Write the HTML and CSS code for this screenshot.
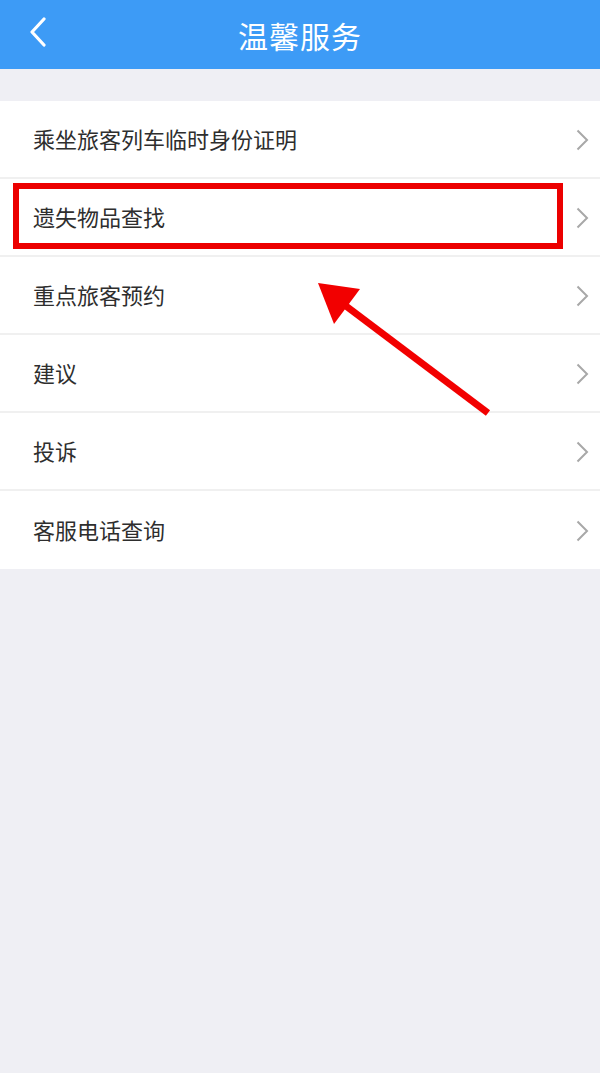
FILE: index.html
```html
<!DOCTYPE html>
<html lang="zh-CN">
<head>
    <meta charset="UTF-8">
    <meta name="viewport" content="width=device-width, initial-scale=1.0">
    <title>温馨服务</title>
    <link rel="stylesheet" href="styles.css">
</head>
<body>
    <div class="page">
        <div class="header">
            <span class="back">
                <svg width="20" height="30" viewBox="0 0 20 30"><path d="M16 2 L4 15 L16 28" fill="none" stroke="#fff" stroke-width="3.2" stroke-linecap="round" stroke-linejoin="round"/></svg>
            </span>
            <h1>温馨服务</h1>
        </div>
        <div class="list">
            <div class="item"><span>乘坐旅客列车临时身份证明</span><svg class="arrow" width="13" height="22" viewBox="0 0 13 22"><path d="M1.5 1.5 L11 11 L1.5 20.5" fill="none" stroke="#a8a8a8" stroke-width="2"/></svg></div>
            <div class="item"><span>遗失物品查找</span><svg class="arrow" width="13" height="22" viewBox="0 0 13 22"><path d="M1.5 1.5 L11 11 L1.5 20.5" fill="none" stroke="#a8a8a8" stroke-width="2"/></svg></div>
            <div class="item"><span>重点旅客预约</span><svg class="arrow" width="13" height="22" viewBox="0 0 13 22"><path d="M1.5 1.5 L11 11 L1.5 20.5" fill="none" stroke="#a8a8a8" stroke-width="2"/></svg></div>
            <div class="item"><span>建议</span><svg class="arrow" width="13" height="22" viewBox="0 0 13 22"><path d="M1.5 1.5 L11 11 L1.5 20.5" fill="none" stroke="#a8a8a8" stroke-width="2"/></svg></div>
            <div class="item"><span>投诉</span><svg class="arrow" width="13" height="22" viewBox="0 0 13 22"><path d="M1.5 1.5 L11 11 L1.5 20.5" fill="none" stroke="#a8a8a8" stroke-width="2"/></svg></div>
            <div class="item"><span>客服电话查询</span><svg class="arrow" width="13" height="22" viewBox="0 0 13 22"><path d="M1.5 1.5 L11 11 L1.5 20.5" fill="none" stroke="#a8a8a8" stroke-width="2"/></svg></div>
        </div>
        <div class="mark"></div>
        <svg class="pointer" width="200" height="160" viewBox="0 0 200 160">
            <line x1="28" y1="32" x2="186" y2="151" stroke="#f20000" stroke-width="7"/>
            <polygon points="16,21 58,27 32,62" fill="#f20000"/>
        </svg>
    </div>
</body>
</html>
```

FILE: styles.css
```css
body {
    margin: 0;
    background-color: #efeff4;
    font-family: "Noto Sans CJK SC", "Noto Sans", sans-serif;
}
.page {
    position: relative;
    width: 600px;
    min-height: 1073px;
}
.header {
    height: 69px;
    background-color: #3d9bf6;
    display: flex;
    align-items: center;
    justify-content: center;
    position: relative;
}
.header h1 {
    margin: 0;
    color: #fff;
    font-size: 30px;
    font-weight: normal;
    letter-spacing: 1px;
}
.back {
    position: absolute;
    left: 28px;
    top: 17px;
    display: flex;
}
.list {
    margin-top: 32px;
    background: #fff;
}
.item {
    height: 78px;
    box-sizing: border-box;
    display: flex;
    align-items: center;
    justify-content: space-between;
    padding: 0 11px 3px 33px;
    border-bottom: 2px solid #f0f0f0;
    color: #2e2e2e;
    font-size: 22px;
}
.item:last-child {
    border-bottom: none;
}
.arrow {
    margin-top: 4px;
}
.mark {
    position: absolute;
    left: 13px;
    top: 183px;
    width: 538px;
    height: 54px;
    border: 6px solid #ec0000;
}
.pointer {
    position: absolute;
    left: 302px;
    top: 262px;
}
```
